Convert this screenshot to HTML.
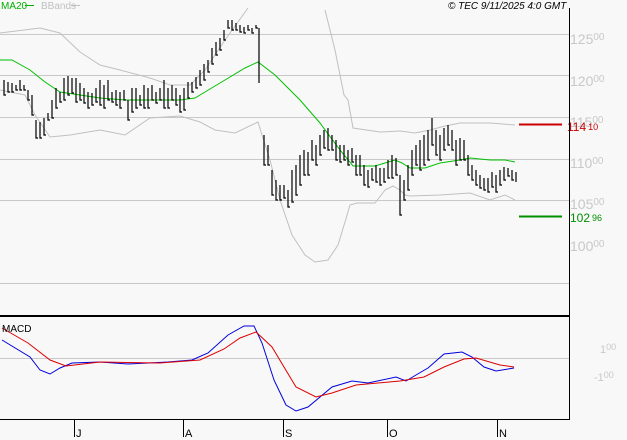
<!DOCTYPE html>
<html><head><meta charset="utf-8"><style>
html,body{margin:0;padding:0;background:#f8f8f8;width:627px;height:440px;overflow:hidden}
svg{display:block;font-family:"Liberation Sans",sans-serif}
</style></head><body>
<svg width="627" height="440" viewBox="0 0 627 440" xmlns="http://www.w3.org/2000/svg">
<rect width="627" height="440" fill="#f8f8f8"/>
<g stroke="#c8c8c8" stroke-width="1">
<line x1="0" y1="34.5" x2="569" y2="34.5"/><line x1="0" y1="75.5" x2="569" y2="75.5"/>
<line x1="0" y1="117.5" x2="569" y2="117.5"/><line x1="0" y1="159.5" x2="569" y2="159.5"/>
<line x1="0" y1="200.5" x2="569" y2="200.5"/><line x1="0" y1="283.5" x2="569" y2="283.5"/>
<line x1="0" y1="358.5" x2="569" y2="358.5"/>
</g>
<g fill="#c8c8c8" font-size="14">
<text x="570" y="44">125<tspan font-size="10" dy="-4">00</tspan></text>
<text x="570" y="86">120<tspan font-size="10" dy="-4">00</tspan></text>
<text x="570" y="127">115<tspan font-size="10" dy="-4">00</tspan></text>
<text x="570" y="168">110<tspan font-size="10" dy="-4">00</tspan></text>
<text x="570" y="209">105<tspan font-size="10" dy="-4">00</tspan></text>
<text x="570" y="251">100<tspan font-size="10" dy="-4">00</tspan></text>
<text x="600" y="353" font-size="11">1<tspan font-size="9" dy="-3">00</tspan></text>
<text x="594" y="381" font-size="11">-1<tspan font-size="9" dy="-3">00</tspan></text>
</g>
<!-- bands -->
<g fill="none" stroke="#c0c0c0" stroke-width="1">
<polyline points="0,33 40,28 60,33 80,52 100,65 120,70 150,78 170,85 190,85 205,70 225,40 248,8"/>
<polyline points="325,10 335,50 344,95 348,100 353,128 380,132 400,131 415,133 430,130 445,126 460,123 490,123 515,125"/>
<polyline points="0,90 25,95 35,115 50,137 70,135 100,130 125,135 150,118 180,116 200,122 215,130 235,133 258,122 262,135 270,160 280,200 292,235 305,255 315,262 328,260 338,245 345,222 350,205 357,203 375,203 385,190 393,186 400,190 405,195 410,196 440,195 470,193 490,200 505,195 515,200"/>
</g>
<polyline fill="none" stroke="#00c000" stroke-width="1" points="0,60 12,60 30,70 45,82 60,92 80,95 100,98 125,100 150,100 180,100 195,98 205,92 225,80 245,68 258,62 275,75 300,100 320,123 340,150 353,166 375,166 385,163 395,160 402,163 410,168 425,168 440,163 460,160 470,158 490,160 505,160 515,162"/>
<path fill="none" stroke="#000" stroke-width="1.2" d="
M4 80V95h2M8 82V92h2M12 83V92h2M16 85V90h2M20 80V90h2M24 85V90h2M28 90V100h2M32 95V115h2M36 120V138h2M40 122V138h2M44 118V135h2M48 113V120h2M52 100V118h2M56 88V108h2M60 92V102h2M64 78V100h2M68 76V95h2M72 78V93h2M76 78V102h2M80 83V100h2M84 88V103h2M88 92V108h2M92 93V105h2M96 88V102h2M100 80V105h2M104 85V108h2M108 80V100h2M112 92V102h2M116 90V105h2M120 92V108h2M124 90V100h2M128 100V120h2M132 88V112h2M136 88V108h2M140 95V105h2M144 85V108h2M148 88V108h2M152 85V100h2M156 92V103h2M160 88V100h2M164 80V108h2M168 88V108h2M172 85V100h2M176 88V105h2M180 95V112h2M184 88V110h2M188 82V98h2M192 82V92h2M196 77V88h2M200 70V85h2M204 64V80h2M208 60V72h2M212 48V64h2M216 42V55h2M220 38V50h2M224 30V40h2M228 20V28h2M232 20V30h2M236 23V30h2M240 25V32h2M244 27V33h2M248 25V30h2M252 28V33h2M256 25V28h2M259 28V83
M264 135V165h2M268 145V165h2M272 170V195h2M276 180V200h2M280 185V200h2M284 185V198h2M288 190V207h2M292 170V202h2M296 165V195h2M300 155V185h2M304 150V175h2M308 152V175h2M312 140V160h2M316 145V165h2M320 135V155h2M324 130V148h2M328 128V150h2M332 135V150h2M336 140V160h2M340 145V162h2M344 145V160h2M348 150V165h2M352 148V162h2M356 155V175h2M360 155V175h2M364 165V185h2M368 170V187h2M372 168V180h2M376 165V182h2M380 168V185h2M384 168V182h2M388 160V178h2M392 155V178h2M396 158V175h2M400 175V215h2M404 180V200h2M408 165V190h2M412 150V175h2M416 145V165h2M420 140V170h2M424 135V165h2M428 130V160h2M432 118V145h2M436 130V155h2M440 135V160h2M444 128V150h2M448 125V145h2M452 130V150h2M456 140V165h2M460 138V160h2M464 140V160h2M468 155V175h2M472 165V180h2M476 170V185h2M480 175V188h2M484 178V190h2M488 178V192h2M492 172V187h2M496 175V192h2M500 170V185h2M504 167V180h2M508 168V176h2M512 170V180h2M516 172V182"/>
<line x1="519" y1="124.5" x2="562" y2="124.5" stroke="#cc0000" stroke-width="2"/>
<line x1="519" y1="216.5" x2="562" y2="216.5" stroke="#009000" stroke-width="2"/>
<text x="567" y="131" fill="#cc0000" font-size="12">114<tspan font-size="9" dx="2" dy="-1">10</tspan></text>
<text x="570" y="222" fill="#009000" font-size="12">102<tspan font-size="9" dx="2" dy="-1">96</tspan></text>
<!-- MACD -->
<polyline fill="none" stroke="#0000dd" stroke-width="1" points="2,340 30,357 40,370 50,374 60,368 72,363 100,362 128,364 168,362 192,360 208,353 228,335 244,326 254,326 262,343 274,380 286,405 296,411 308,407 332,387 352,381 368,383 396,377 406,381 416,375 428,368 444,354 462,352 472,357 484,367 496,371 514,368"/>
<polyline fill="none" stroke="#dd0000" stroke-width="1" points="2,328 28,343 50,360 66,366 100,362 160,363 200,360 224,349 240,338 256,332 272,347 296,387 316,397 332,393 356,385 400,381 424,377 444,367 464,359 476,358 500,365 514,367"/>
<text x="2" y="332" font-size="10" fill="#000">MACD</text>
<!-- frames -->
<line x1="0" y1="316" x2="569" y2="316" stroke="#000" stroke-width="2"/>
<line x1="0" y1="419.5" x2="570" y2="419.5" stroke="#000" stroke-width="1"/>
<line x1="569.5" y1="8" x2="569.5" y2="420" stroke="#000" stroke-width="1"/>
<g stroke="#000"><line x1="74.5" y1="420" x2="74.5" y2="437"/><line x1="183.5" y1="420" x2="183.5" y2="437"/><line x1="283.5" y1="420" x2="283.5" y2="437"/><line x1="387.5" y1="420" x2="387.5" y2="437"/><line x1="497.5" y1="420" x2="497.5" y2="437"/></g>
<g font-size="11" fill="#000"><text x="76" y="437">J</text><text x="185" y="437">A</text><text x="285" y="437">S</text><text x="389" y="437">O</text><text x="499" y="437">N</text></g>
<text x="1" y="9" font-size="10" fill="#00b000">MA20</text>
<line x1="25" y1="5.5" x2="34" y2="5.5" stroke="#00b000"/>
<text x="41" y="9" font-size="10" fill="#c0c0c0">BBands</text>
<line x1="71" y1="5.5" x2="80" y2="5.5" stroke="#c0c0c0"/>
<text x="448" y="9" font-size="10" font-style="italic" fill="#000">© TEC 9/11/2025 4:0 GMT</text>
</svg>
</body></html>
